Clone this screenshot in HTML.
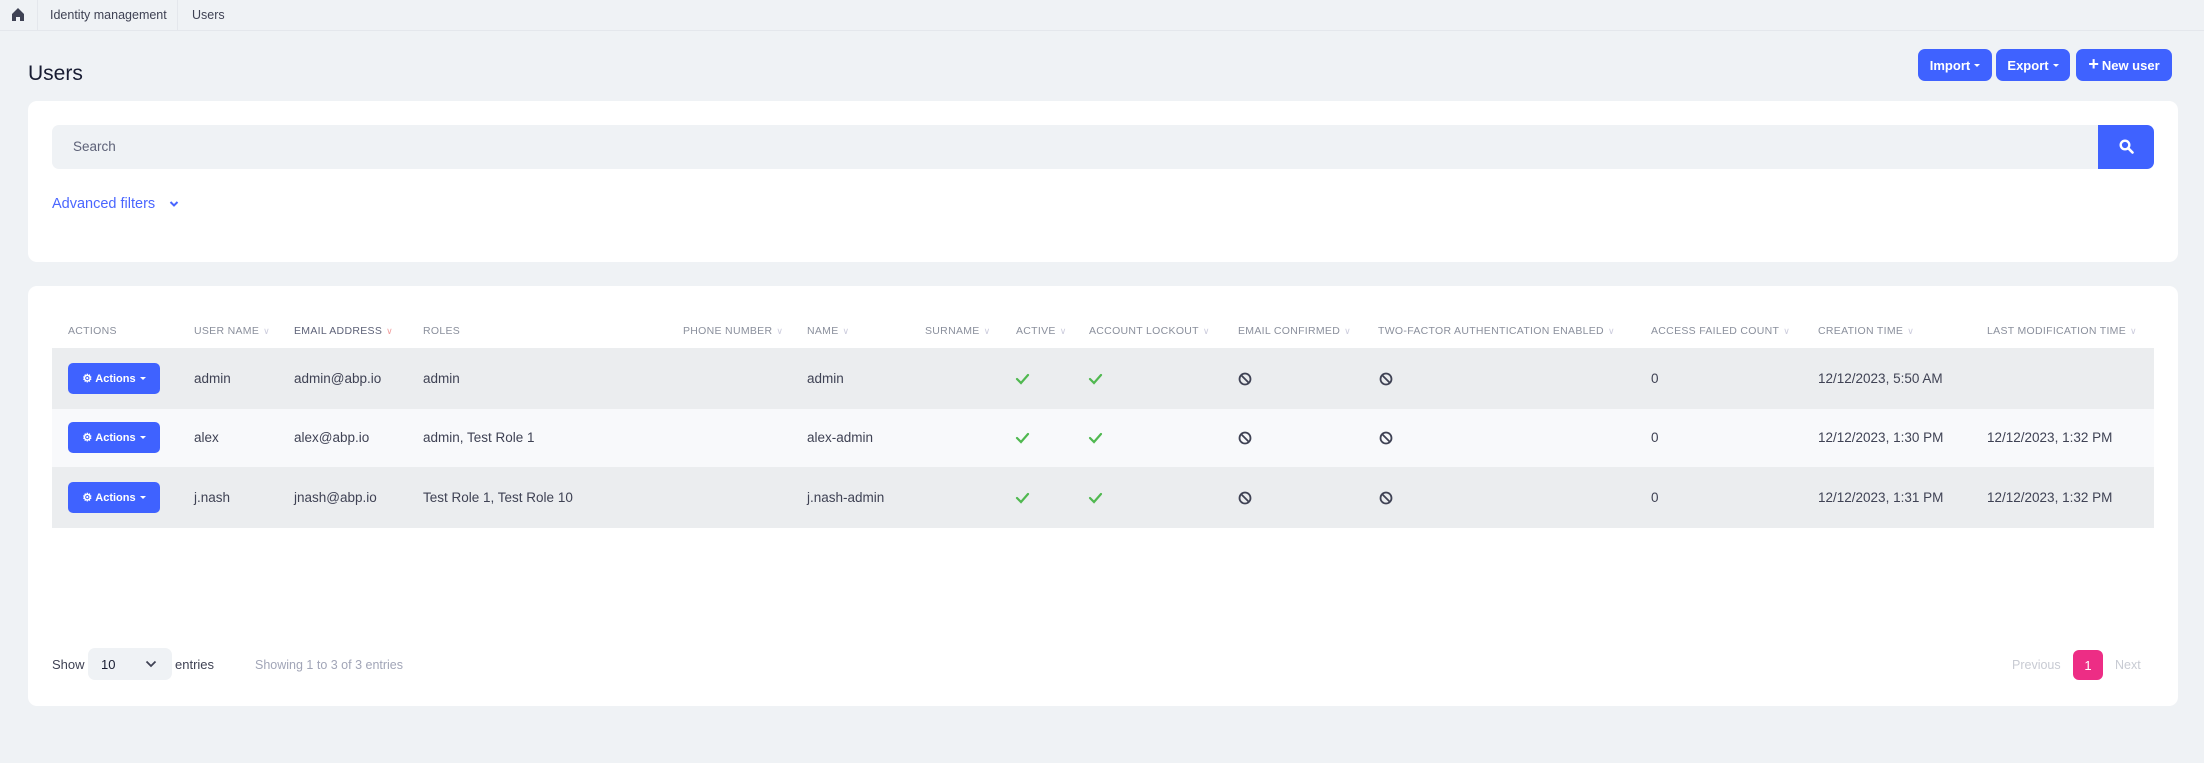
<!DOCTYPE html>
<html><head><meta charset="utf-8"><style>
*{box-sizing:border-box;margin:0;padding:0}
body{width:2204px;height:763px;background:#eff2f5;font-family:"Liberation Sans",sans-serif;position:relative;overflow:hidden;color:#3f4254}
.a{position:absolute;white-space:nowrap}
.card{position:absolute;background:#fff;border-radius:9px}
.btn{position:absolute;background:#3f62ff;color:#fff;border-radius:7px;font-weight:bold;font-size:13px;display:flex;align-items:center;justify-content:center}
.car{display:inline-block;border-left:3px solid transparent;border-right:3px solid transparent;border-top:3.5px solid #fff;margin-left:4px;vertical-align:middle}
.th{position:absolute;top:325px;font-size:10.5px;color:#8a8f9c;letter-spacing:.3px}
.th i{font-style:normal;color:#ccd;font-size:9px;margin-left:4px}
.row{position:absolute;left:52px;width:2102px}
.td{position:absolute;font-size:13.5px;color:#3f4254}
.ab{position:absolute;left:16px;top:15px;width:92px;height:31px;background:#3f62ff;border-radius:5px;color:#fff;font-size:11px;font-weight:bold;display:flex;align-items:center;justify-content:center}
</style></head><body>
<div class="a" style="left:0;top:0;width:2204px;height:31px;border-bottom:1px solid #e4e7ec"></div>
<svg class="a" style="left:12px;top:8px" width="12" height="13" viewBox="0 0 12 13"><path d="M6 0L0 6v7h4V9h4v4h4V6z" fill="#3f4254"/></svg>
<div class="a" style="left:37px;top:0;width:1px;height:30px;background:#e4e7ec"></div>
<div class="a" style="left:50px;top:8px;font-size:12.5px;color:#3f4254">Identity management</div>
<div class="a" style="left:177px;top:0;width:1px;height:30px;background:#e4e7ec"></div>
<div class="a" style="left:192px;top:8px;font-size:12.5px;color:#3f4254">Users</div>

<div class="a" style="left:28px;top:62px;font-size:21px;color:#181c32">Users</div>
<div class="btn" style="left:1918px;top:49px;width:74px;height:32px">Import<span class="car"></span></div>
<div class="btn" style="left:1996px;top:49px;width:74px;height:32px">Export<span class="car"></span></div>
<div class="btn" style="left:2076px;top:49px;width:96px;height:32px"><span style="font-size:18px;margin-right:3px;margin-top:-2px">+</span>New user</div>

<div class="card" style="left:28px;top:101px;width:2150px;height:161px"></div>
<div class="a" style="left:52px;top:125px;width:2046px;height:44px;background:#eff2f5;border-radius:7px 0 0 7px"></div>
<div class="a" style="left:73px;top:139px;font-size:13.5px;color:#5e6278">Search</div>
<div class="a" style="left:2098px;top:125px;width:56px;height:44px;background:#3f62ff;border-radius:0 7px 7px 0"></div>
<svg class="a" style="left:2119px;top:139px" width="15" height="15" viewBox="0 0 15 15"><circle cx="6" cy="6" r="4.3" fill="none" stroke="#fff" stroke-width="2.4"/><path d="M9.2 9.2L13.5 13.5" stroke="#fff" stroke-width="2.6" stroke-linecap="round"/></svg>
<div class="a" style="left:52px;top:196px;font-size:14.5px;color:#4a66ff">Advanced filters</div>
<svg class="a" style="left:169px;top:200px" width="10" height="8" viewBox="0 0 10 8"><path d="M1.5 2l3.5 3.5L8.5 2" fill="none" stroke="#4a66ff" stroke-width="2"/></svg>

<div class="card" style="left:28px;top:286px;width:2150px;height:420px"></div>
<div class="th" style="left:68px">ACTIONS</div>
<div class="th" style="left:194px">USER NAME<i>∨</i></div>
<div class="th" style="left:294px;color:#5e6278">EMAIL ADDRESS<i style="color:#f1a0a0">∨</i></div>
<div class="th" style="left:423px">ROLES</div>
<div class="th" style="left:683px">PHONE NUMBER<i>∨</i></div>
<div class="th" style="left:807px">NAME<i>∨</i></div>
<div class="th" style="left:925px">SURNAME<i>∨</i></div>
<div class="th" style="left:1016px">ACTIVE<i>∨</i></div>
<div class="th" style="left:1089px">ACCOUNT LOCKOUT<i>∨</i></div>
<div class="th" style="left:1238px">EMAIL CONFIRMED<i>∨</i></div>
<div class="th" style="left:1378px">TWO-FACTOR AUTHENTICATION ENABLED<i>∨</i></div>
<div class="th" style="left:1651px">ACCESS FAILED COUNT<i>∨</i></div>
<div class="th" style="left:1818px">CREATION TIME<i>∨</i></div>
<div class="th" style="left:1987px">LAST MODIFICATION TIME<i>∨</i></div>

<div class="row" style="top:348px;height:61px;background:#ebedef">
 <div class="ab">⚙&nbsp;Actions<span class="car"></span></div>
 <div class="td" style="left:142px;top:23px">admin</div><div class="td" style="left:242px;top:23px">admin@abp.io</div><div class="td" style="left:371px;top:23px">admin</div><div class="td" style="left:755px;top:23px">admin</div>
 <div class="td" style="left:1599px;top:23px">0</div><div class="td" style="left:1766px;top:23px">12/12/2023, 5:50 AM</div>
</div>
<div class="row" style="top:409px;height:58px;background:#f8f9fb">
 <div class="ab" style="top:13px">⚙&nbsp;Actions<span class="car"></span></div>
 <div class="td" style="left:142px;top:21px">alex</div><div class="td" style="left:242px;top:21px">alex@abp.io</div><div class="td" style="left:371px;top:21px">admin, Test Role 1</div><div class="td" style="left:755px;top:21px">alex-admin</div>
 <div class="td" style="left:1599px;top:21px">0</div><div class="td" style="left:1766px;top:21px">12/12/2023, 1:30 PM</div><div class="td" style="left:1935px;top:21px">12/12/2023, 1:32 PM</div>
</div>
<div class="row" style="top:467px;height:61px;background:#ebedef">
 <div class="ab">⚙&nbsp;Actions<span class="car"></span></div>
 <div class="td" style="left:142px;top:23px">j.nash</div><div class="td" style="left:242px;top:23px">jnash@abp.io</div><div class="td" style="left:371px;top:23px">Test Role 1, Test Role 10</div><div class="td" style="left:755px;top:23px">j.nash-admin</div>
 <div class="td" style="left:1599px;top:23px">0</div><div class="td" style="left:1766px;top:23px">12/12/2023, 1:31 PM</div><div class="td" style="left:1935px;top:23px">12/12/2023, 1:32 PM</div>
</div>
<svg class="a" style="left:0;top:0" width="2204" height="763">
<g fill="none" stroke="#3f4254" stroke-width="1.8">
<circle cx="1245" cy="379" r="5.5"/><path d="M1241 375l8 8"/>
<circle cx="1386" cy="379" r="5.5"/><path d="M1382 375l8 8"/>
<circle cx="1245" cy="438" r="5.5"/><path d="M1241 434l8 8"/>
<circle cx="1386" cy="438" r="5.5"/><path d="M1382 434l8 8"/>
<circle cx="1245" cy="498" r="5.5"/><path d="M1241 494l8 8"/>
<circle cx="1386" cy="498" r="5.5"/><path d="M1382 494l8 8"/>
</g>
<g fill="none" stroke="#50b850" stroke-width="2.2" stroke-linecap="round">
<path d="M1017 379l4 4 7-8"/><path d="M1090 379l4 4 7-8"/>
<path d="M1017 438l4 4 7-8"/><path d="M1090 438l4 4 7-8"/>
<path d="M1017 498l4 4 7-8"/><path d="M1090 498l4 4 7-8"/>
</g></svg>

<div class="a" style="left:52px;top:657px;font-size:13px;color:#3f4254">Show</div>
<div class="a" style="left:88px;top:648px;width:84px;height:32px;background:#eff2f5;border-radius:7px"></div>
<div class="a" style="left:101px;top:657px;font-size:13px;color:#181c32">10</div>
<svg class="a" style="left:145px;top:660px" width="12" height="8" viewBox="0 0 12 8"><path d="M1.5 1.5l4.5 4.5 4.5-4.5" fill="none" stroke="#3f4254" stroke-width="1.8"/></svg>
<div class="a" style="left:175px;top:657px;font-size:13px;color:#3f4254">entries</div>
<div class="a" style="left:255px;top:658px;font-size:12.5px;color:#a1a5b7">Showing 1 to 3 of 3 entries</div>
<div class="a" style="left:2012px;top:658px;font-size:12.5px;color:#c8cbd3">Previous</div>
<div class="a" style="left:2073px;top:650px;width:30px;height:30px;background:#ed2d85;border-radius:6px;color:#fff;font-size:13px;display:flex;align-items:center;justify-content:center">1</div>
<div class="a" style="left:2115px;top:658px;font-size:12.5px;color:#c8cbd3">Next</div>
</body></html>
